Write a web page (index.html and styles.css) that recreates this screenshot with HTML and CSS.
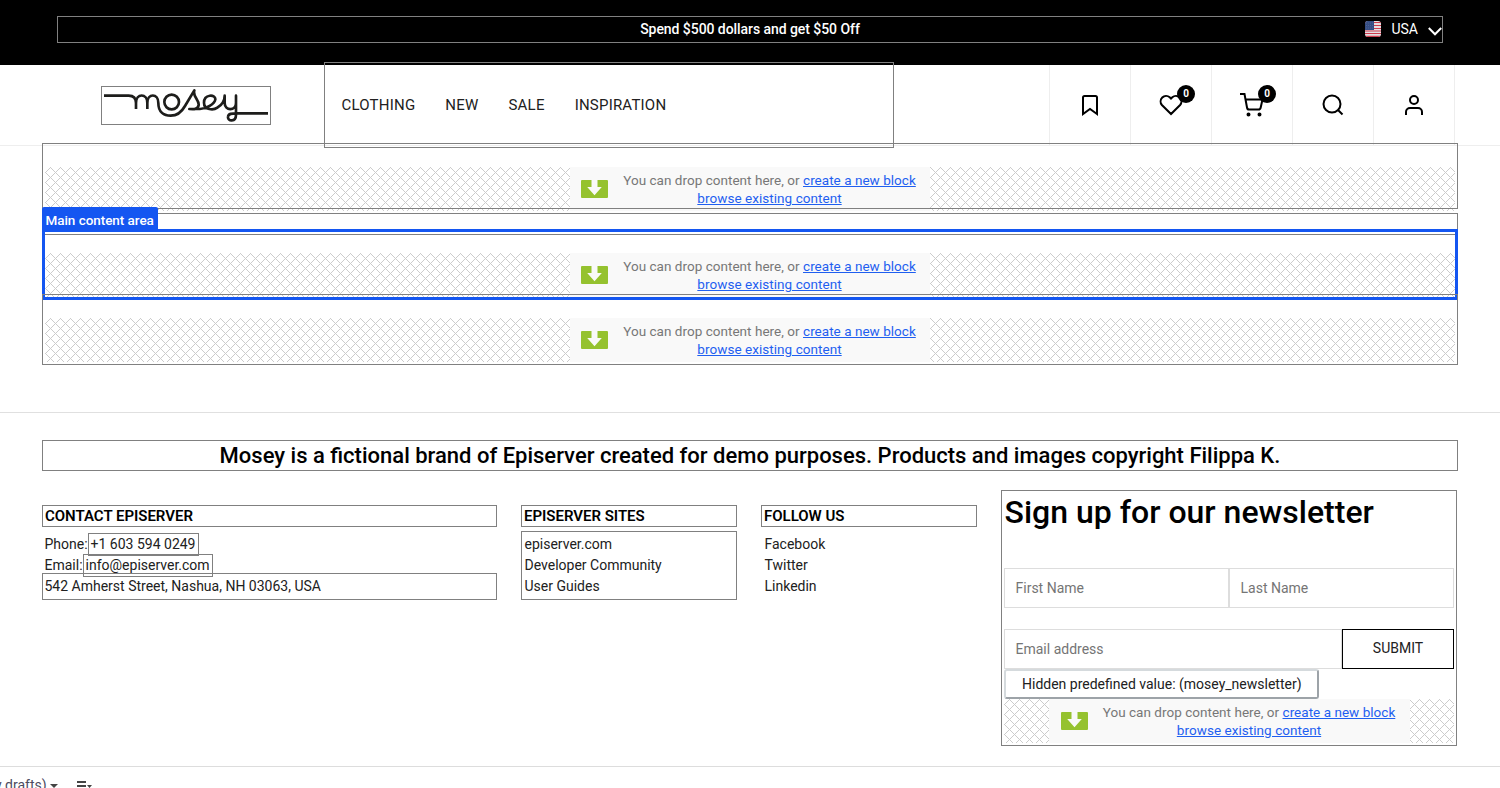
FILE: index.html
```html
<!DOCTYPE html>
<html lang="en">
<head>
<meta charset="utf-8">
<title>Mosey</title>
<link rel="stylesheet" href="styles.css">
</head>
<body>
<svg class="defs" width="0" height="0">
  <symbol id="drop" viewBox="0 0 27 18"><path fill="#95c22f" d="M1 0H10.500V7H6.200L13.500 15.300 20.800 7H16.500V0H26Q27 0 27 1V17Q27 18 26 18H1Q0 18 0 17V1Q0 0 1 0Z"/></symbol>
</svg>
<div class="page">
  <div class="topbar">
    <div class="promo edit">
      <span class="promo-text">Spend $500 dollars and get $50 Off</span>
      <div class="market">
        <svg class="flag" width="16" height="16" viewBox="0 0 16 16"><defs><clipPath id="fc"><rect width="16" height="16" rx="3"/></clipPath></defs><g clip-path="url(#fc)"><rect width="16" height="16" fill="#e5dfe2"/><path d="M0 1.500H16M0 4.500H16M0 7.500H16M0 10H16M0 12.500H16M0 15.300H16" stroke="#cf3b4c" stroke-width="1.200"/><rect width="9" height="9" fill="#354d83"/><path d="M1 2H9M1 4.500H9M1 7H9" stroke="#5d709c" stroke-width=".6" stroke-dasharray="1 1"/></g></svg>
        <span class="country">USA</span>
        <svg class="chev" width="14" height="9" viewBox="0 0 14 9"><path d="M.8 1 7 7.300 13.200 1" fill="none" stroke="#fff" stroke-width="2"/></svg>
      </div>
    </div>
  </div>
  <header class="header">
    <div class="logo edit">
      <svg width="168" height="37" viewBox="36 36 504 111" fill="none" stroke="#1d1d1b" stroke-width="8" stroke-linejoin="round"><path d="M42 62H116Q138 62 138 84V102M138 84C138 54 172 54 172 84V102M172 84C172 54 205 54 205 84C205 112 222 122 242 122C264 122 275 111 285 93L313 46C307 64 328 75 326 90C324 104 311 103 298 102H330C348 102 374 87 376 73C377 57 342 57 342 83C342 106 371 106 382 98C395 90 404 76 404 62V84C404 109 438 108 438 84V62V119C438 142 412 140 414 125C415 115 426 115 438 115H534"/><circle cx="245" cy="81" r="22"/></svg>
    </div>
    <nav class="nav edit">
      <a>CLOTHING</a><a>NEW</a><a>SALE</a><a>INSPIRATION</a>
    </nav>
    <div class="tools">
      <div class="tool"><svg width="24" height="24" viewBox="0 0 24 24"><path d="M19 21 12 16 5 21V4.500A1.500 1.500 0 0 1 6.500 3H17.500A1.500 1.500 0 0 1 19 4.500Z"/></svg></div>
      <div class="tool"><svg width="24" height="24" viewBox="0 0 24 24"><path d="M12 21 2.900 12A5.500 5.500 0 0 1 10.700 4.300L12 5.600 13.300 4.300A5.500 5.500 0 0 1 21.100 12Z"/></svg><span class="badge">0</span></div>
      <div class="tool"><svg width="26" height="26" viewBox="0 0 26 26"><path d="M1 2H5.500L8 15.500Q8.300 17.500 10 17.500H19.500Q21.300 17.500 21.700 15.500L23.500 7.500H6.500"/><circle cx="9.500" cy="22.500" r="1" fill="#000"/><circle cx="20.500" cy="22.500" r="1" fill="#000"/></svg><span class="badge">0</span></div>
      <div class="tool"><svg width="24" height="24" viewBox="0 0 24 24"><circle cx="11" cy="11" r="8.500"/><path d="M17 17 21.500 21.500"/></svg></div>
      <div class="tool"><svg width="24" height="24" viewBox="0 0 24 24"><circle cx="12" cy="7" r="4"/><path d="M4 22V19A4 4 0 0 1 8 15H16A4 4 0 0 1 20 19V22"/></svg></div>
    </div>
  </header>
  <main class="content">
    <section class="area a1 edit"><div class="zone"><div class="hint"><svg width="27" height="18"><use href="#drop"/></svg><p><span class="l1">You can drop content here, or <a>create a new block</a></span><span class="l2"><a>browse existing content</a></span></p></div></div></section>
    <section class="area a2 edit"></section>
    <section class="area a3"><span class="label">Main content area</span><div class="rule"></div><div class="zone"><div class="hint"><svg width="27" height="18"><use href="#drop"/></svg><p><span class="l1">You can drop content here, or <a>create a new block</a></span><span class="l2"><a>browse existing content</a></span></p></div></div></section>
    <section class="area a4 edit"><div class="zone"><div class="hint"><svg width="27" height="18"><use href="#drop"/></svg><p><span class="l1">You can drop content here, or <a>create a new block</a></span><span class="l2"><a>browse existing content</a></span></p></div></div></section>
  </main>
  <footer class="footer">
    <div class="claim edit"><span>Mosey is a fictional brand of Episerver created for demo purposes. Products and images copyright Filippa K.</span></div>
    <div class="cols">
      <div class="col contact">
        <h4 class="edit">CONTACT EPISERVER</h4>
        <div class="row">Phone:<span class="inline edit">+1 603 594 0249</span></div>
        <div class="row">Email:<span class="inline edit">info@episerver.com</span></div>
        <div class="address edit">542 Amherst Street, Nashua, NH 03063, USA</div>
      </div>
      <div class="col">
        <h4 class="edit">EPISERVER SITES</h4>
        <div class="links edit"><a>episerver.com</a><a>Developer Community</a><a>User Guides</a></div>
      </div>
      <div class="col">
        <h4 class="edit">FOLLOW US</h4>
        <div class="links plain"><a>Facebook</a><a>Twitter</a><a>Linkedin</a></div>
      </div>
      <div class="news edit">
        <h2>Sign up for our newsletter</h2>
        <div class="names"><div class="field">First Name</div><div class="field">Last Name</div></div>
        <div class="mail"><div class="field">Email address</div><div class="submit">SUBMIT</div></div>
        <div class="hidden-value">Hidden predefined value: (mosey_newsletter)</div>
        <div class="zone"><div class="hint"><svg width="27" height="18"><use href="#drop"/></svg><p><span class="l1">You can drop content here, or <a>create a new block</a></span><span class="l2"><a>browse existing content</a></span></p></div></div>
      </div>
    </div>
  </footer>
  <div class="status">
    <span class="drafts">y drafts)</span>
    <svg class="caret" width="8" height="4" viewBox="0 0 8 4"><path d="M0 0H8L4 4Z" fill="#444"/></svg>
    <svg class="menu" width="16" height="10" viewBox="0 0 16 10"><path d="M0 0H9V2H0ZM0 4H9V6H0ZM10 4H15L12.500 7Z" fill="#444"/></svg>
  </div>
</div>
</body>
</html>
```
FILE: styles.css
```css
* { box-sizing: border-box; }
body { margin: 0; background: #fff; color: #212121; font: 14px/21px Roboto, sans-serif; }
.page { height: 788px; overflow: hidden; display: flex; flex-direction: column; }
.defs { display: block; }
.edit { border: 1px solid #808080; }
h2, h4, p { margin: 0; font-weight: 500; color: #000; }
svg { display: block; flex: none; }

.topbar { height: 65px; flex: none; background: #000; padding: 16px 57px; }
.promo { height: 27px; display: grid; grid-template-columns: 1fr auto 1fr; align-items: center; color: #fff; }
.promo-text { grid-column: 2; font-weight: 500; letter-spacing: -.06px; }
.market { display: flex; align-items: center; justify-content: flex-end; }
.country { margin: 0 10px; }
.flag { margin-top: -1px; }
.chev { margin-top: 3px; }

.header { height: 81px; flex: none; border-bottom: 1px solid #eee; display: flex; }
.logo { width: 170px; height: 39px; margin: 21px 53px 0 101px; }
.nav { width: 570px; height: 86px; margin-top: -3px; padding-left: 16.500px; display: flex; align-items: center; font-size: 15px; position: relative; color: #212121; gap: 30px; letter-spacing: .21px; }
.tools { display: flex; margin-left: 155px; border-right: 1px solid #eee; }
.tool { width: 81px; border-left: 1px solid #eee; display: flex; align-items: center; justify-content: center; position: relative; }
.tool svg { fill: none; stroke: #000; stroke-width: 2; }
.badge { position: absolute; left: 46px; top: 20px; width: 18px; height: 18px; border-radius: 50%; background: #000; color: #fff; font-size: 10px; line-height: 18px; text-align: center; font-weight: 700; }

.content { width: 1416px; margin: -3px 42px 0; flex: none; }
.area { position: relative; padding: 23px 2px 0; }
.a1 { height: 66px; }
.a1 .zone { position: relative; z-index: -1; }
.a2 { height: 22px; margin-top: 4px; padding: 0; }
.a3 { height: 71px; margin-top: -6px; border: 3px solid #1456f1; padding: 2px 0 0; }
.a4 { height: 71px; margin-top: -6px; }
.rule { height: 1px; background: #808080; margin-bottom: 18px; }
.label { position: absolute; left: -3px; top: -25px; width: 116px; height: 25px; padding: 3px 0 0 3.500px; background: #1456f1; color: #fff; font-weight: 500; font-size: 13.500px; letter-spacing: -.05px; border-radius: 2px 2px 0 0; white-space: nowrap; }
.zone { height: 44px; display: flex; justify-content: center; background: url("data:image/svg+xml,%3Csvg xmlns='http://www.w3.org/2000/svg' width='10' height='10' shape-rendering='crispEdges'%3E%3Cpath fill='%23ccc' d='M5 0h1v1h-1zM4 1h1v1h-1zM6 1h1v1h-1zM3 2h1v1h-1zM7 2h1v1h-1zM2 3h1v1h-1zM8 3h1v1h-1zM1 4h1v1h-1zM9 4h1v1h-1zM0 5h1v1h-1zM1 6h1v1h-1zM9 6h1v1h-1zM2 7h1v1h-1zM8 7h1v1h-1zM3 8h1v1h-1zM7 8h1v1h-1zM4 9h1v1h-1zM6 9h1v1h-1z'/%3E%3C/svg%3E"); }
.hint { width: 360px; background: #f9f9f9; display: flex; padding: 4px 0 0 11px; }
.hint svg { margin-top: 9px; }
.hint p { width: 293px; margin-left: 15px; display: flex; flex-direction: column; align-items: center; color: #777; font: 13.500px/18px Roboto, sans-serif; white-space: nowrap; }
.hint a { color: #1f5ff0; text-decoration: underline; }
.l1 { letter-spacing: .03px; }
.l2 { letter-spacing: .05px; }

.footer { margin-top: 47px; border-top: 1px solid #e0e0e0; padding: 27px 42px 0; height: 354px; flex: none; }
.claim { height: 31px; text-align: center; color: #000; font: 500 22px/29px Roboto, sans-serif; white-space: nowrap; }
.cols { display: grid; grid-template-columns: 455px 216px 216px 456px; gap: 24px; margin-top: 19px; }
.col { padding-top: 15px; }
.col h4 { height: 22px; padding-left: 2px; font-size: 15px; line-height: 20px; color: #000; font-weight: 600; letter-spacing: -.02px; }
.row { height: 21px; padding-left: 2.500px; display: flex; white-space: nowrap; }
h4 + .row { margin-top: 7px; }
.inline { height: 23px; margin-top: -1px; padding: 0 2px; }
.address { height: 27px; margin-top: -3px; padding: 2px 1.500px; position: relative; white-space: nowrap; }
.links { height: 69px; margin-top: 4px; padding: 2px 2.500px; display: flex; flex-direction: column; }
.plain { border: 0; padding: 3px 3.500px; }
.news { height: 256px; padding: 0 2px; }
.news .hint { width: 361px; padding-left: 12px; }
.news h2 { font-size: 32px; line-height: 42px; padding-left: .5px; white-space: nowrap; }
.names { display: grid; grid-template-columns: 1fr 1fr; margin-top: 35px; }
.field { height: 40px; border: 1px solid #ddd; padding-left: 10.500px; line-height: 38px; color: #757575; }
.mail { display: grid; grid-template-columns: 338px 112px; margin-top: 21px; }
.submit { border: 1px solid #000; line-height: 37px; text-align: center; }
.hidden-value { width: 315px; height: 30px; border: 2px solid; border-color: #d5dadd #9da3a8 #9da3a8 #d5dadd; border-radius: 3px; padding-left: 16px; line-height: 26px; white-space: nowrap; }

.status { flex: none; height: 22px; border-top: 1px solid #ddd; display: flex; }
.drafts { width: 51px; margin-left: -5px; padding-top: 8px; color: #4b4b60; white-space: nowrap; }
.caret { margin: 17px 0 0 4px; }
.menu { margin: 14px 0 0 19px; }
```
